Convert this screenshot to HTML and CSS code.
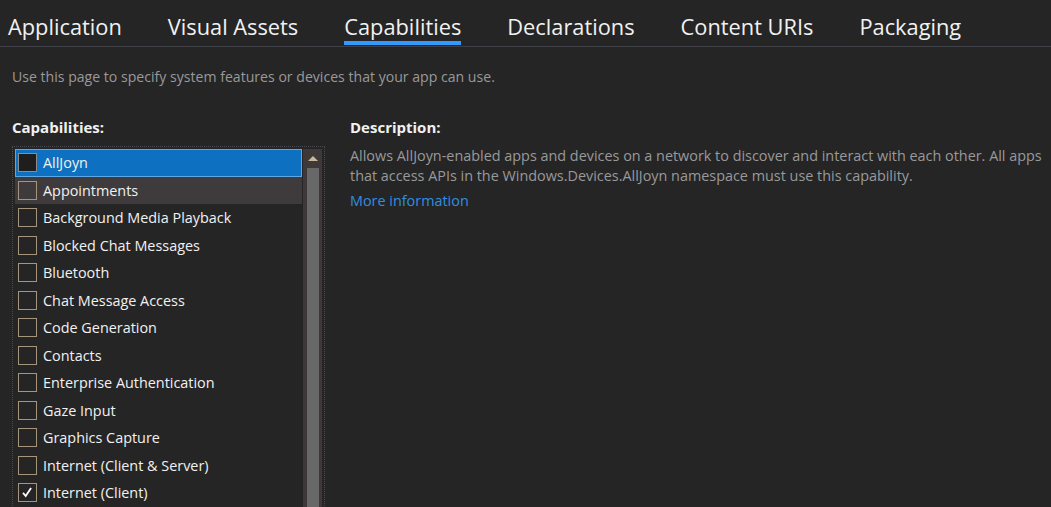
FILE: index.html
```html
<!DOCTYPE html>
<html>
<head>
<meta charset="utf-8">
<link rel="stylesheet" href="styles.css">
</head>
<body>
<nav class="tabs">
  <span class="tab">Application</span>
  <span class="tab">Visual Assets</span>
  <span class="tab active">Capabilities</span>
  <span class="tab">Declarations</span>
  <span class="tab">Content URIs</span>
  <span class="tab">Packaging</span>
</nav>
<p class="intro">Use this page to specify system features or devices that your app can use.</p>
<div class="main">
  <section class="left">
    <h2 class="label">Capabilities:</h2>
    <div class="listbox">
      <ul class="items">
        <li class="item selected"><span class="box"></span>AllJoyn</li>
        <li class="item hover"><span class="box"></span>Appointments</li>
        <li class="item"><span class="box"></span>Background Media Playback</li>
        <li class="item"><span class="box"></span>Blocked Chat Messages</li>
        <li class="item"><span class="box"></span>Bluetooth</li>
        <li class="item"><span class="box"></span>Chat Message Access</li>
        <li class="item"><span class="box"></span>Code Generation</li>
        <li class="item"><span class="box"></span>Contacts</li>
        <li class="item"><span class="box"></span>Enterprise Authentication</li>
        <li class="item"><span class="box"></span>Gaze Input</li>
        <li class="item"><span class="box"></span>Graphics Capture</li>
        <li class="item"><span class="box"></span>Internet (Client &amp; Server)</li>
        <li class="item"><span class="box checked"><svg viewBox="0 0 19 19" width="17" height="17"><path d="M4.5 10 L7.5 13.5 L13.5 4.5" fill="none" stroke="#ffffff" stroke-width="2"/></svg></span>Internet (Client)</li>
      </ul>
      <div class="scrollbar">
        <div class="arrow"></div>
        <div class="thumb"></div>
      </div>
    </div>
  </section>
  <section class="right">
    <h2 class="label">Description:</h2>
    <p class="desc">Allows AllJoyn-enabled apps and devices on a network to discover and interact with each other. All apps that access APIs in the Windows.Devices.AllJoyn namespace must use this capability.</p>
    <a class="more">More information</a>
  </section>
</div>
</body>
</html>
```

FILE: styles.css
```css
html, body {
  margin: 0;
  padding: 0;
  background: #252526;
  overflow: hidden;
  height: 100%;
}
body {
  font-family: "Open Sans", "Noto Sans", sans-serif;
  color: #f1f1f1;
}
.tabs {
  display: flex;
  gap: 46px;
  padding: 0 0 0 8px;
  height: 46px;
  border-bottom: 1px solid #3f3f46;
}
.tab {
  font-size: 21.8px;
  line-height: 28px;
  padding-top: 13px;
  height: 46px;
  box-sizing: border-box;
  color: #f1f1f1;
  position: relative;
}
.tab.active::after {
  content: "";
  position: absolute;
  left: 0;
  right: 0;
  top: 41px;
  height: 4px;
  background: #3399ff;
}
.intro {
  margin: 0;
  padding: 20px 0 0 12px;
  font-size: 14.1px;
  line-height: 19px;
  color: #999999;
}
.main {
  display: flex;
  padding: 31px 0 0 12px;
}
.left {
  width: 313px;
  flex: none;
}
.right {
  padding-left: 25px;
  flex: 1;
  padding-right: 0;
}
.label {
  margin: 0;
  font-size: 15px;
  font-weight: 700;
  line-height: 20px;
  color: #f1f1f1;
}
.listbox {
  margin-top: 9px;
  border: 1px dotted #4a4a50;
  display: flex;
  padding: 2px 2px 0 2px;
  height: 400px;
}
.items {
  list-style: none;
  margin: 0;
  padding: 0;
  flex: 1;
}
.item {
  height: 27.5px;
  display: flex;
  align-items: center;
  font-size: 14.4px;
  color: #f1f1f1;
  padding-left: 3px;
  box-sizing: border-box;
}
.item.selected {
  background: #0e70c0;
  outline: 1px solid #5ca7e6;
  outline-offset: -1px;
}
.item.hover {
  background: #3f3a3b;
}
.box {
  width: 19px;
  height: 19px;
  border: 1px solid #a5957d;
  box-sizing: border-box;
  margin-right: 6px;
  display: flex;
  align-items: center;
  justify-content: center;
  flex: none;
}
.selected .box {
  background: #1e1e1e;
  border-color: #8c8c8c;
}
.scrollbar {
  width: 19px;
  background: #3e3838;
  margin-left: 1px;
  display: flex;
  flex-direction: column;
  align-items: center;
}
.arrow {
  margin-top: 7px;
  width: 0;
  height: 0;
  border-left: 5px solid transparent;
  border-right: 5px solid transparent;
  border-bottom: 5px solid #c8b89c;
}
.thumb {
  margin-top: 7px;
  width: 12px;
  flex: 1;
  background: #686868;
}
.desc {
  margin: 9px 0 0 0;
  font-size: 14.4px;
  line-height: 20px;
  color: #999999;
}
.more {
  display: block;
  margin-top: 5px;
  font-size: 14.4px;
  line-height: 20px;
  color: #2f8fe0;
}
```
